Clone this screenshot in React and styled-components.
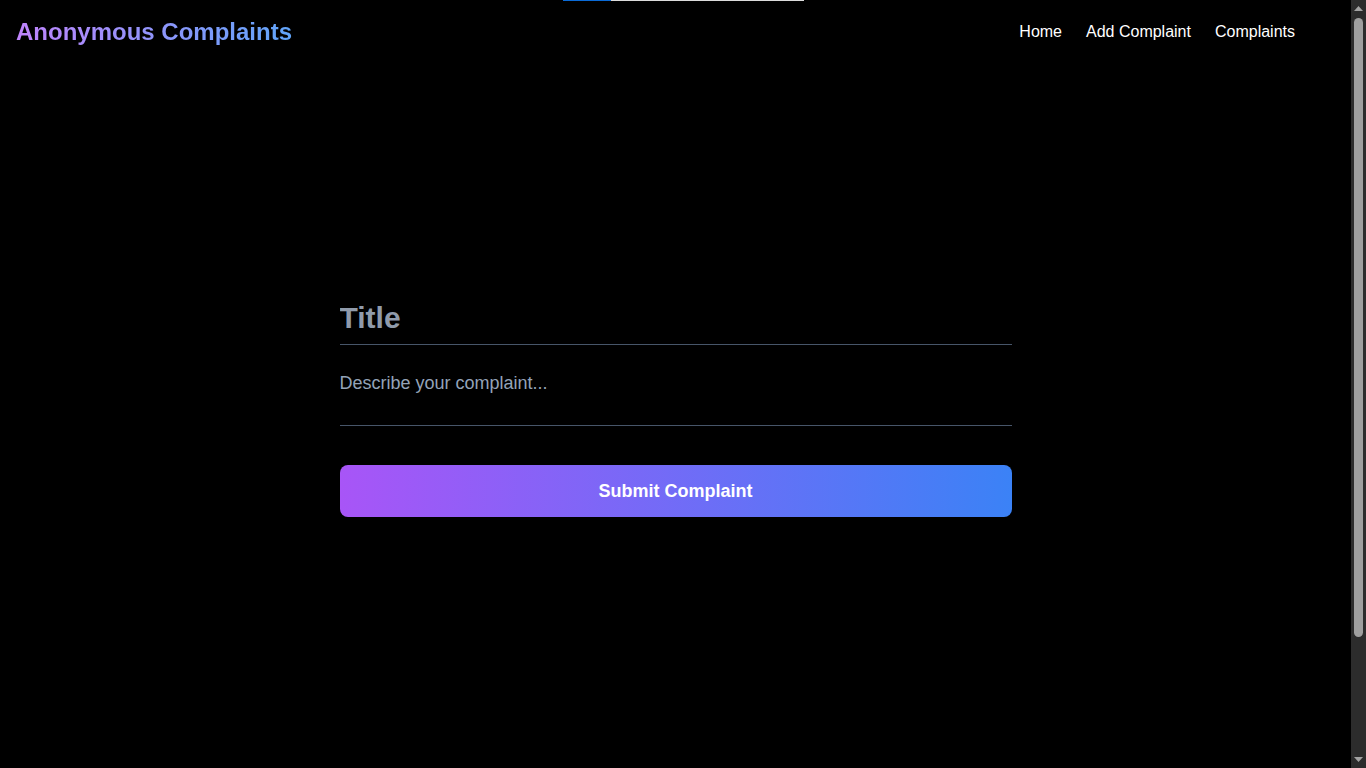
import React from "react";
import styled, { createGlobalStyle } from "styled-components";

const Global = createGlobalStyle`
  html { color-scheme: dark; background: #000; }
  body {
    margin: 0;
    padding-right: 15px;
    background: #000;
    color: #fff;
    font-family: "Liberation Sans", Arial, sans-serif;
  }
  * { box-sizing: border-box; }
`;

const Progress = styled.div`
  position: fixed;
  top: 0;
  left: 563px;
  width: 241px;
  height: 1px;
  background: #dcdcdc;
  display: flex;
  z-index: 10;
`;

const ProgressFill = styled.div`
  height: 100%;
  background: #0a6ad6;
`;

const ScrollTrack = styled.div`
  position: fixed;
  top: 0;
  right: 0;
  width: 15px;
  height: 100vh;
  background: #2c2c2c;
  display: flex;
  flex-direction: column;
  align-items: center;
  z-index: 20;
`;

const ScrollArrow = styled.div`
  width: 15px;
  height: 17px;
  display: flex;
  align-items: center;
  justify-content: center;
  flex-shrink: 0;
`;

const ScrollThumb = styled.div`
  width: 9px;
  height: 619px;
  border-radius: 5px;
  background: #9f9f9f;
  margin-top: 1px;
`;

const ScrollSpacer = styled.div`
  flex: 1;
`;

const Header = styled.header`
  height: 64px;
  display: flex;
  align-items: center;
  justify-content: space-between;
  padding: 0 16px;
`;

const Logo = styled.h1`
  margin: 0;
  font-size: 24px;
  line-height: 32px;
  font-weight: 700;
  background: linear-gradient(90deg, #c084fc, #60a5fa);
  -webkit-background-clip: text;
  background-clip: text;
  color: transparent;
`;

const Nav = styled.nav`
  display: flex;
  gap: 24px;
  margin-right: 40px;
`;

const NavLink = styled.a`
  color: #fff;
  font-size: 16px;
  text-decoration: none;
  cursor: pointer;
`;

const Main = styled.main`
  min-height: 839px;
  padding-top: 229px;
  display: flex;
  justify-content: center;
`;

const Form = styled.form`
  width: 672px;
  display: flex;
  flex-direction: column;
`;

const TitleInput = styled.input`
  display: block;
  width: 100%;
  background: transparent;
  border: none;
  border-bottom: 1px solid #475569;
  padding: 7px 0 8px;
  font-family: inherit;
  font-size: 30px;
  line-height: 36px;
  height: 52px;
  font-weight: 700;
  color: #fff;
  outline: none;
  &::placeholder { color: #909bab; opacity: 1; }
`;

const Textarea = styled.textarea`
  display: block;
  width: 100%;
  margin-top: 16px;
  height: 65px;
  background: transparent;
  border: none;
  border-bottom: 1px solid #475569;
  padding: 8px 0;
  font-family: inherit;
  font-size: 18px;
  line-height: 28px;
  color: #fff;
  resize: none;
  outline: none;
  overflow: hidden;
  &::placeholder { color: #94a3b8; opacity: 1; }
`;

const Submit = styled.button`
  margin-top: 39px;
  height: 52px;
  width: 100%;
  border: none;
  border-radius: 8px;
  background: linear-gradient(90deg, #a855f7, #3b82f6);
  color: #fff;
  font-family: inherit;
  font-size: 18px;
  font-weight: 700;
  cursor: pointer;
`;

const Arrow = ({ down }) => (
  <svg width="9" height="5" viewBox="0 0 9 5">
    <polygon
      points={down ? "0,0 9,0 4.5,5" : "0,5 9,5 4.5,0"}
      fill="#a3a3a3"
    />
  </svg>
);

export default function App() {
  return (
    <>
      <Global />
      <Progress>
        <ProgressFill style={{ width: "20%" }} />
      </Progress>
      <ScrollTrack aria-hidden="true">
        <ScrollArrow>
          <Arrow />
        </ScrollArrow>
        <ScrollThumb />
        <ScrollSpacer />
        <ScrollArrow>
          <Arrow down />
        </ScrollArrow>
      </ScrollTrack>
      <Header>
        <Logo>Anonymous Complaints</Logo>
        <Nav>
          <NavLink>Home</NavLink>
          <NavLink>Add Complaint</NavLink>
          <NavLink>Complaints</NavLink>
        </Nav>
      </Header>
      <Main>
        <Form onSubmit={(e) => e.preventDefault()}>
          <TitleInput placeholder="Title" />
          <Textarea placeholder="Describe your complaint..." />
          <Submit type="submit">Submit Complaint</Submit>
        </Form>
      </Main>
    </>
  );
}
